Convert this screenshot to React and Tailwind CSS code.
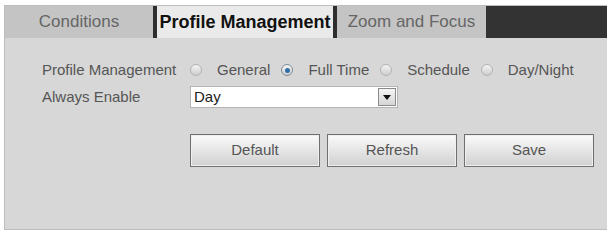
import React, { useState } from 'react';

const font = { fontFamily: '"Liberation Sans", Arial, sans-serif' };

function Radio({ checked }) {
  return (
    <span
      className={`relative inline-block w-[12px] h-[12px] rounded-full border shrink-0 ${
        checked ? 'border-[#7d8c9b] bg-gradient-to-b from-[#f4f4f4] to-[#cfcfcf]' : 'border-[#b3b3b3] bg-gradient-to-b from-[#f4f4f4] to-[#cdcdcd]'
      }`}
    >
      {checked && (
        <span className="absolute left-[2.5px] top-[2.5px] w-[5px] h-[5px] rounded-full bg-[#2f6fa8]" />
      )}
    </span>
  );
}

export default function App() {
  const [mode, setMode] = useState('Full Time');
  const options = ['General', 'Full Time', 'Schedule', 'Day/Night'];

  return (
    <div className="w-[609px] h-[231px] bg-white pt-[5px] pl-[4px] pr-[2px] pb-[1px]" style={font}>
      <div className="h-full flex flex-col bg-[#d7d7d7] border-l border-t border-b border-[#bdbdbd]">
        {/* tabs */}
        <div className="flex h-[32px] shrink-0">
          <div className="w-[148px] flex items-center justify-center bg-[#c4c4c4] text-[17px] text-[#666]">Conditions</div>
          <div className="w-[4px] bg-[#2e2e2e]" />
          <div className="w-[176px] flex items-center justify-center bg-[#eaeaea] text-[18px] font-bold text-[#111] whitespace-nowrap overflow-hidden">
            Profile Management
          </div>
          <div className="w-[4px] bg-[#2e2e2e]" />
          <div className="w-[149px] flex items-center justify-center bg-[#c4c4c4] text-[17px] text-[#666]">Zoom and Focus</div>
          <div className="flex-1 bg-[#333333]" />
        </div>

        {/* form */}
        <div className="pl-[37px] pt-[21px] flex flex-col text-[15px] text-[#555]">
          <div className="flex items-center h-[22px]">
            <div className="w-[148px] whitespace-nowrap">Profile Management</div>
            <div className="flex items-center gap-[11px]">
              {options.map(o => (
                <label key={o} className="flex items-center gap-[15px] cursor-pointer" onClick={() => setMode(o)}>
                  <Radio checked={mode === o} />
                  <span className="whitespace-nowrap">{o}</span>
                </label>
              ))}
            </div>
          </div>

          <div className="flex items-center h-[22px] mt-[5px]">
            <div className="w-[148px] whitespace-nowrap">Always Enable</div>
            <div className="w-[208px] h-[22px] flex items-center justify-between bg-white border border-[#b5b5b5] pl-[3px] pr-[1px]">
              <span className="text-[#222]">Day</span>
              <span className="w-[18px] h-[18px] flex items-center justify-center border border-[#8a8a8a] bg-gradient-to-b from-[#f6f6f6] to-[#d6d6d6]">
                <svg width="8" height="5" viewBox="0 0 8 5">
                  <path d="M0 0 L8 0 L4 5 Z" fill="#111" />
                </svg>
              </span>
            </div>
          </div>

          <div className="flex gap-[7px] mt-[26px] ml-[148px]">
            {['Default', 'Refresh', 'Save'].map(b => (
              <button
                key={b}
                className="w-[130px] h-[33px] border border-[#6f6f6f] bg-gradient-to-b from-[#fbfbfb] to-[#d0d0d0] text-[15px] text-[#555] shadow-[inset_0_0_0_1px_#efefef]"
              >
                {b}
              </button>
            ))}
          </div>
        </div>
      </div>
    </div>
  );
}
